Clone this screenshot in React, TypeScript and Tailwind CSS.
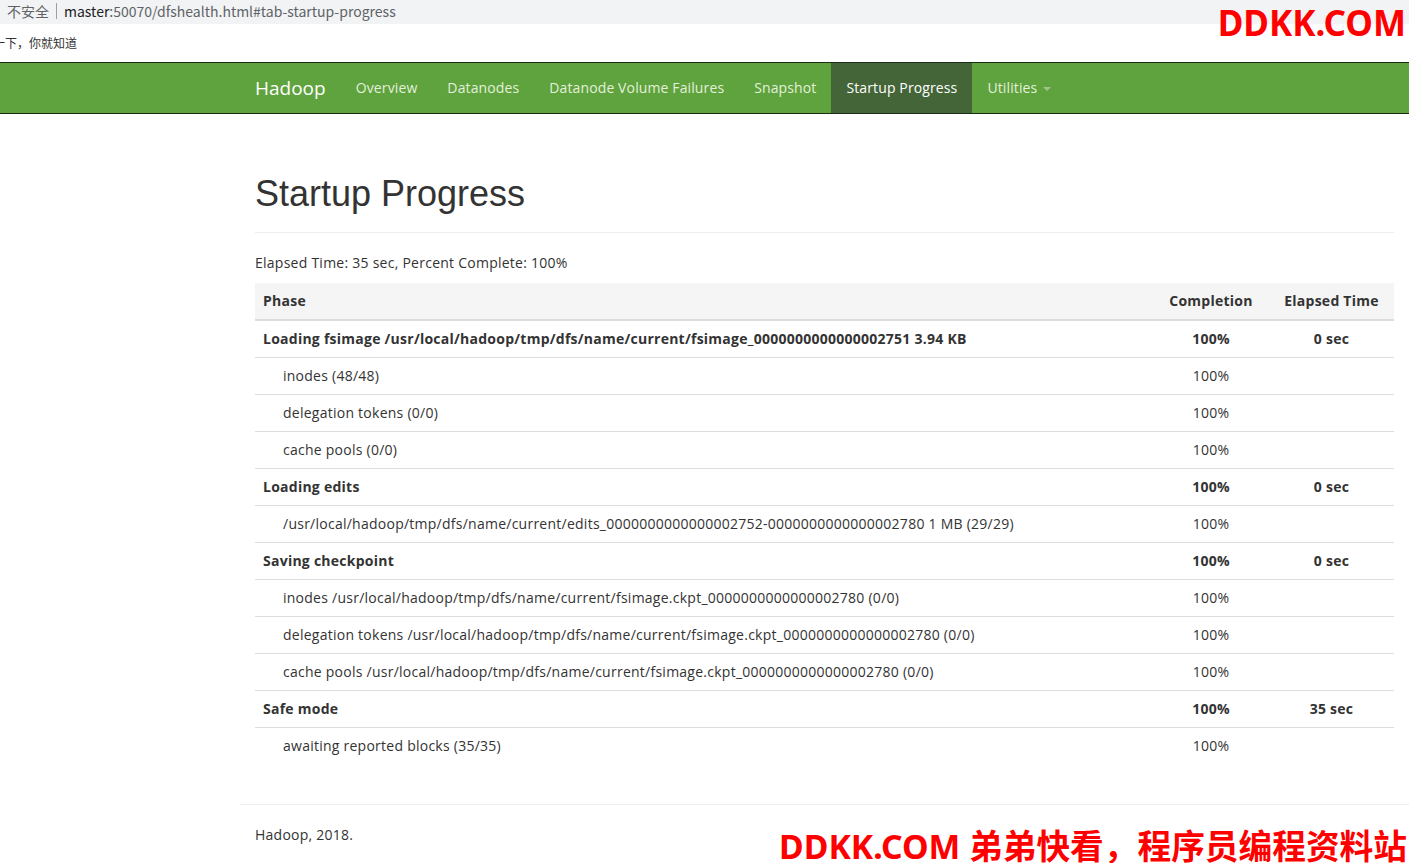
import { Fragment } from 'react';

type Step = { name: string; pct: string };
type Phase = { name: string; pct: string; time: string; steps: Step[] };

const phases: Phase[] = [
  {
    name: 'Loading fsimage /usr/local/hadoop/tmp/dfs/name/current/fsimage_0000000000000002751 3.94 KB',
    pct: '100%',
    time: '0 sec',
    steps: [
      { name: 'inodes (48/48)', pct: '100%' },
      { name: 'delegation tokens (0/0)', pct: '100%' },
      { name: 'cache pools (0/0)', pct: '100%' },
    ],
  },
  {
    name: 'Loading edits',
    pct: '100%',
    time: '0 sec',
    steps: [
      {
        name: '/usr/local/hadoop/tmp/dfs/name/current/edits_0000000000000002752-0000000000000002780 1 MB (29/29)',
        pct: '100%',
      },
    ],
  },
  {
    name: 'Saving checkpoint',
    pct: '100%',
    time: '0 sec',
    steps: [
      { name: 'inodes /usr/local/hadoop/tmp/dfs/name/current/fsimage.ckpt_0000000000000002780 (0/0)', pct: '100%' },
      { name: 'delegation tokens /usr/local/hadoop/tmp/dfs/name/current/fsimage.ckpt_0000000000000002780 (0/0)', pct: '100%' },
      { name: 'cache pools /usr/local/hadoop/tmp/dfs/name/current/fsimage.ckpt_0000000000000002780 (0/0)', pct: '100%' },
    ],
  },
  {
    name: 'Safe mode',
    pct: '100%',
    time: '35 sec',
    steps: [{ name: 'awaiting reported blocks (35/35)', pct: '100%' }],
  },
];

const navItems = ['Overview', 'Datanodes', 'Datanode Volume Failures', 'Snapshot', 'Startup Progress'];

const body = "font-['Open_Sans','Noto_Sans_CJK_SC',sans-serif]";

export default function App() {
  return (
    <div className={`relative min-h-[863px] w-[1409px] overflow-hidden bg-white text-[14px] leading-[20px] tracking-[0.25px] text-[#333] ${body}`}>
      {/* browser address strip */}
      <div className="flex h-[24px] items-center bg-[#f1f3f4] pb-[3px] pl-[7px] text-[14px] tracking-normal text-[#5f6368] font-['Noto_Sans_CJK_SC',sans-serif]">
        <span>不安全</span>
        <span className="mx-[7px] h-[16px] w-px bg-[#9aa0a6]" />
        <span className="text-[#202124]">master</span>
        <span>:50070/dfshealth.html#tab-startup-progress</span>
      </div>
      <div className="flex h-[38px] items-center text-[12px] tracking-normal text-[#333] font-['Noto_Sans_CJK_SC',sans-serif]">
        <span className="-ml-[7px]">一下，你就知道</span>
      </div>

      {/* navbar */}
      <nav className="h-[52px] border-y border-[#1e2a18] bg-[#5fa33e] tracking-[0.12px]">
        <div className="ml-[240px] flex h-[50px] w-[1169px] items-stretch px-[15px]">
          <span className="flex items-center pr-[15px] text-[19px] tracking-normal text-white">Hadoop</span>
          {navItems.map((item) => (
            <span
              key={item}
              className={
                item === 'Startup Progress'
                  ? 'flex items-center bg-[#436537] px-[15px] text-white'
                  : 'flex items-center px-[15px] text-[#e3f0da]'
              }
            >
              {item}
            </span>
          ))}
          <span className="flex items-center gap-[6px] px-[15px] text-[#e3f0da]">
            Utilities
            <span className="mt-[2px] h-0 w-0 border-x-[4px] border-t-[4px] border-x-transparent border-t-[#9fc48c]" />
          </span>
        </div>
      </nav>

      {/* main content */}
      <main className="ml-[240px] w-[1169px]">
        <div className="px-[15px] pt-[60px]">
          <div className="border-b border-[#eee] pb-[9px]">
            <h1 className="mb-[9px] text-[36px] leading-[40px] tracking-normal font-['Liberation_Sans',Arial,sans-serif] text-[#333]">
              Startup Progress
            </h1>
          </div>
          <p className="mt-[20px] mb-[10px]">Elapsed Time: 35 sec, Percent Complete: 100%</p>

          <table className="w-full border-collapse">
            <thead>
              <tr className="border-b-2 border-[#ddd] bg-[#f5f5f5]">
                <th className="p-[8px] text-left font-bold">Phase</th>
                <th className="w-[116px] p-[8px] text-center font-bold">Completion</th>
                <th className="w-[125px] p-[8px] text-center font-bold">Elapsed Time</th>
              </tr>
            </thead>
            <tbody>
              {phases.map((ph) => (
                <Fragment key={ph.name}>
                  <tr className="border-t border-[#ddd] font-bold">
                    <td className="p-[8px]">{ph.name}</td>
                    <td className="p-[8px] text-center">{ph.pct}</td>
                    <td className="p-[8px] text-center">{ph.time}</td>
                  </tr>
                  {ph.steps.map((st) => (
                    <tr key={st.name} className="border-t border-[#ddd]">
                      <td className="py-[8px] pr-[8px] pl-[28px]">{st.name}</td>
                      <td className="p-[8px] text-center">{st.pct}</td>
                      <td className="p-[8px]" />
                    </tr>
                  ))}
                </Fragment>
              ))}
            </tbody>
          </table>
        </div>
        <hr className="mt-[40px] border-t border-[#eee]" />
        <p className="mt-[20px] px-[15px]">Hadoop, 2018.</p>
      </main>

      {/* watermarks */}
      <div className="absolute top-[3px] right-[3px] text-[35px] leading-[40px] font-bold tracking-normal text-[#ff0000] font-['Noto_Sans','Noto_Sans_CJK_SC',sans-serif]">
        DDKK.COM
      </div>
      <div className="absolute right-[2px] bottom-[-3px] text-[33.7px] leading-[40px] font-bold tracking-normal text-[#ff0000] font-['Noto_Sans','Noto_Sans_CJK_SC',sans-serif]">
        DDKK.COM 弟弟快看，程序员编程资料站
      </div>
    </div>
  );
}
